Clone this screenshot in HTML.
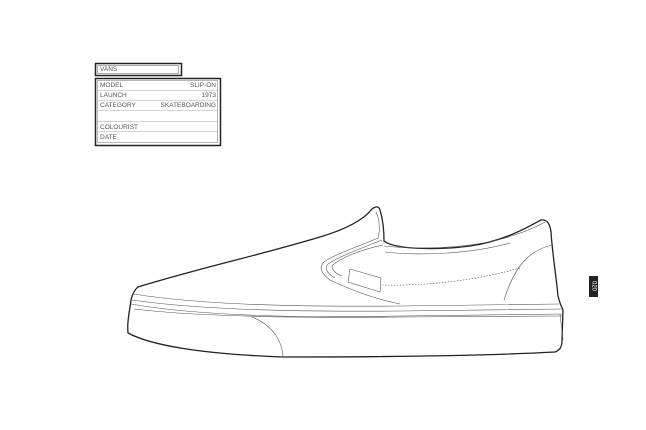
<!DOCTYPE html>
<html><head><style>
html,body{margin:0;padding:0;background:#fff;width:646px;height:430px;overflow:hidden;position:relative;font-family:"Liberation Sans",sans-serif}
.t{position:absolute;font-size:6.5px;color:#555;}
</style></head><body>
<svg width="646" height="430" style="position:absolute;left:0;top:0" fill="none">
<!-- label box -->
<rect x="95.5" y="63.5" width="86" height="12" stroke="#222" stroke-width="1.5"/>
<rect x="97.5" y="65.5" width="81" height="8" stroke="#777" stroke-width="0.6"/>
<path d="M95.5 78.5 H220.5 V145.5 H95.5 Z" stroke="#222" stroke-width="1.5"/>
<rect x="97.5" y="80.5" width="120" height="62" stroke="#888" stroke-width="0.6"/>
<g stroke="#aaa" stroke-width="0.6">
<line x1="97.5" y1="90.5" x2="217.5" y2="90.5"/>
<line x1="97.5" y1="100.5" x2="217.5" y2="100.5"/>
<line x1="97.5" y1="110.5" x2="217.5" y2="110.5"/>
<line x1="97.5" y1="121.5" x2="217.5" y2="121.5"/>
<line x1="97.5" y1="131.5" x2="217.5" y2="131.5"/>
</g>
<!-- shoe -->
<g stroke="#222" stroke-width="1.3" stroke-linejoin="round" stroke-linecap="round">
<path d="M138 287 C200 268 260 255 320 237 C350 228 365 218 372 209 C376 206 379 206 380 210 C383 220 384 232 384 241 C395 250 440 250 470 246 C505 241 530 226 541 220 C547 219 550 224 551 232 C552 250 556 275 558 296"/>
<path d="M138 287 C134 290 132 296 131 300 C129 315 127 322 128 333 C150 345 200 354 283 357 C380 357 480 356 555 352 C560 350 562 347 562 340 L563 310 C561 306 559 300 558 296"/>
</g>
<g stroke="#555" stroke-width="0.6">
<path d="M134 294 C200 305 300 307 400 306 L559 304"/>
<path d="M132 300 C200 310 300 312 400 311 L562 309"/>
<path d="M131 304 C200 316 300 318 400 316 L562 314"/>
<path d="M134 309 C200 317 300 318 400 317 L562 316"/>
<path d="M252 317 C272 325 282 340 283 357"/>
<path d="M376 212 C380 220 380 232 378 238 C360 246 335 254 324 262 C318 268 322 274 330 280 C355 292 380 300 400 304"/>
<path d="M382 240 C362 248 340 256 328 264 C324 269 328 274 335 278"/>
<path d="M384 246 C420 250 470 248 505 238 C525 232 538 226 545 222"/>
<path d="M385 252 C420 256 470 254 510 243"/>
<path d="M383 245 C360 250 340 258 332 266 C332 270 336 274 342 276"/>
<path d="M552 245 C530 250 515 265 504 300"/>
<path d="M350 269 L381 278 L380 292 L348 282 Z"/>
<path d="M382 285 C420 286 470 282 520 268" stroke-dasharray="1.5 1.5"/>
<path d="M560 314 L563 340" />
</g>
<rect x="589" y="276" width="9" height="21" fill="#222"/>
</svg>
<div class="t" style="left:100px;top:66px">VANS</div>
<div class="t" style="left:100px;top:82px">MODEL</div>
<div class="t" style="right:430px;top:82px">SLIP-ON</div>
<div class="t" style="left:100px;top:92px">LAUNCH</div>
<div class="t" style="right:430px;top:92px">1973</div>
<div class="t" style="left:100px;top:102px">CATEGORY</div>
<div class="t" style="right:430px;top:102px">SKATEBOARDING</div>
<div class="t" style="left:100px;top:124px">COLOURIST</div>
<div class="t" style="left:100px;top:134px">DATE</div>
<div style="position:absolute;left:586px;top:283px;width:15px;font-size:6px;color:#fff;transform:rotate(90deg);text-align:center">020</div>
</body></html>
